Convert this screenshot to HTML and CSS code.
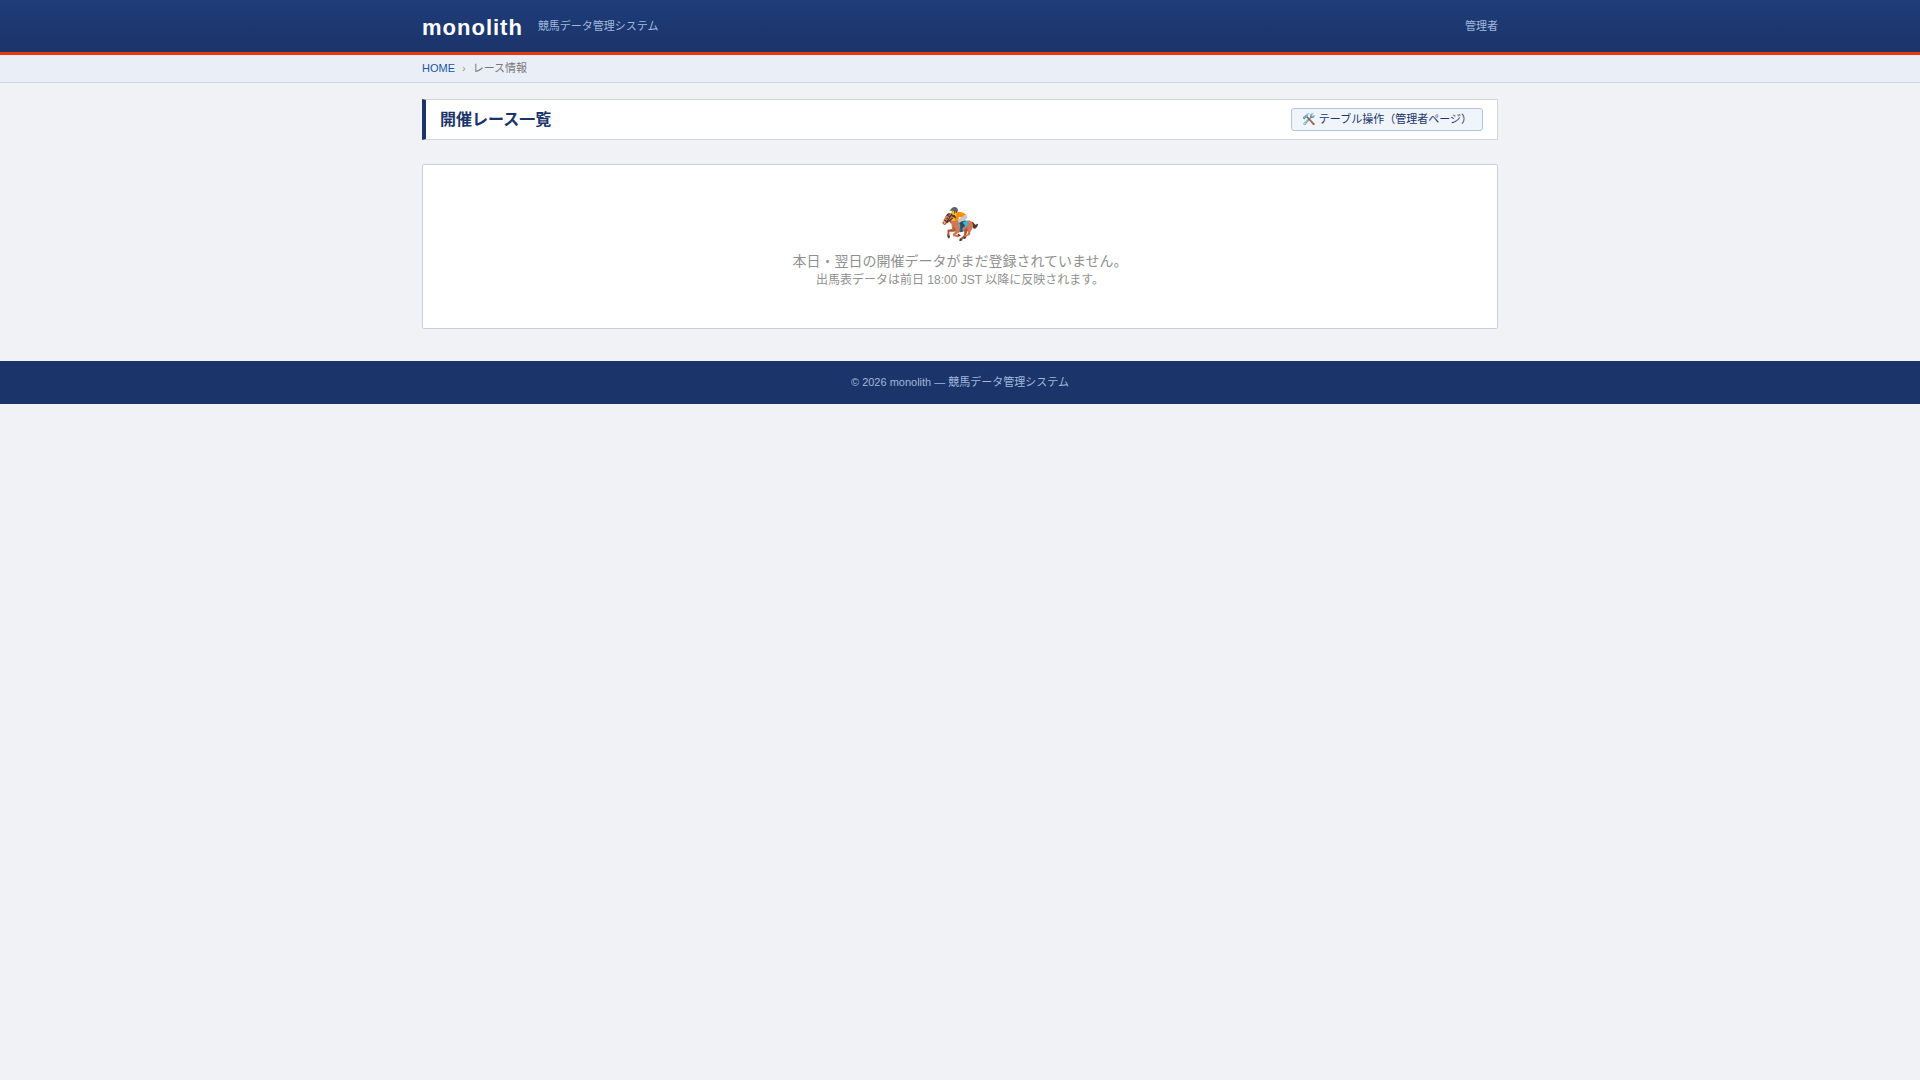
FILE: index.html
```html
<!DOCTYPE html>
<html lang="ja">

<head>
    <meta charset="UTF-8" />
    <meta name="viewport" content="width=device-width, initial-scale=1.0" />
    <title>開催レース一覧 | monolith</title>
    <link rel="stylesheet" href="styles.css">
</head>

<body>

    <header class="site-header">
        <div class="container header-inner">
            <a class="logo" href="#">monolith</a>
            <span class="tagline">競馬データ管理システム</span>
            <a class="admin-link" href="#">管理者</a>
        </div>
    </header>

    <nav class="breadcrumb">
        <div class="container breadcrumb-inner">
            <a href="#">HOME</a>
            <span class="sep">›</span>
            <span>レース情報</span>
        </div>
    </nav>

    <main class="container main">
        <div class="page-title">
            <h1>開催レース一覧</h1>
            <a class="btn-admin" href="#">🛠️ テーブル操作（管理者ページ）</a>
        </div>

        <div class="empty-box">
            <div class="empty-icon">🏇</div>
            <p class="empty-text">本日・翌日の開催データがまだ登録されていません。</p>
            <p class="empty-note">出馬表データは前日 18:00 JST 以降に反映されます。</p>
        </div>
    </main>

    <footer class="site-footer">© 2026 monolith — 競馬データ管理システム</footer>

</body>

</html>
```

FILE: styles.css
```css
* {
    box-sizing: border-box;
    margin: 0;
    padding: 0;
}

body {
    font-family: "Liberation Sans", "Noto Sans CJK JP", sans-serif;
    font-size: 11px;
    line-height: 15px;
    background: #f0f2f6;
    color: #333;
}

a {
    text-decoration: none;
}

.container {
    max-width: 1100px;
    margin: 0 auto;
    padding: 0 12px;
}

.site-header {
    background: linear-gradient(180deg, #1f3d7a, #1b3469);
    border-bottom: 3px solid #e8380d;
}

.header-inner {
    display: flex;
    align-items: center;
    gap: 15px;
    padding-top: 12px;
    padding-bottom: 8px;
}

.logo {
    color: #fff;
    font-size: 22px;
    font-weight: bold;
    line-height: 32px;
    letter-spacing: 1px;
}

.tagline,
.admin-link {
    color: #a0b8dc;
    padding-bottom: 4px;
}

.admin-link {
    margin-left: auto;
}

.breadcrumb {
    background: #eaeef7;
    border-bottom: 1px solid #d0d8e8;
    color: #777;
}

.breadcrumb-inner {
    display: flex;
    gap: 7px;
    padding-top: 6px;
    padding-bottom: 6px;
}

.breadcrumb a {
    color: #1a56a0;
}

.breadcrumb .sep {
    color: #999;
}

.main {
    padding-top: 16px;
    padding-bottom: 32px;
}

.page-title {
    display: flex;
    align-items: center;
    justify-content: space-between;
    background: #fff;
    border: 1px solid #d0d5e0;
    border-left: 4px solid #1b3469;
    padding: 8px 14px;
    margin-bottom: 24px;
}

.page-title h1 {
    color: #1b3469;
    font-size: 16px;
    line-height: 22px;
}

.btn-admin {
    background: #f0f4fb;
    border: 1px solid #b0c4de;
    border-radius: 3px;
    color: #1b3469;
    padding: 3px 10px;
}

.empty-box {
    background: #fff;
    border: 1px solid #c8d0e0;
    border-radius: 2px;
    color: #909090;
    text-align: center;
    padding: 40px 20px 38px;
}

.empty-icon {
    font-size: 32px;
    line-height: 38px;
    margin-bottom: 8px;
}

.empty-text {
    font-size: 14px;
    line-height: 20px;
}

.empty-note {
    font-size: 12px;
    line-height: 19px;
}

.site-footer {
    background: #1b3469;
    color: #a0b8dc;
    text-align: center;
    padding: 14px 0;
}
```
